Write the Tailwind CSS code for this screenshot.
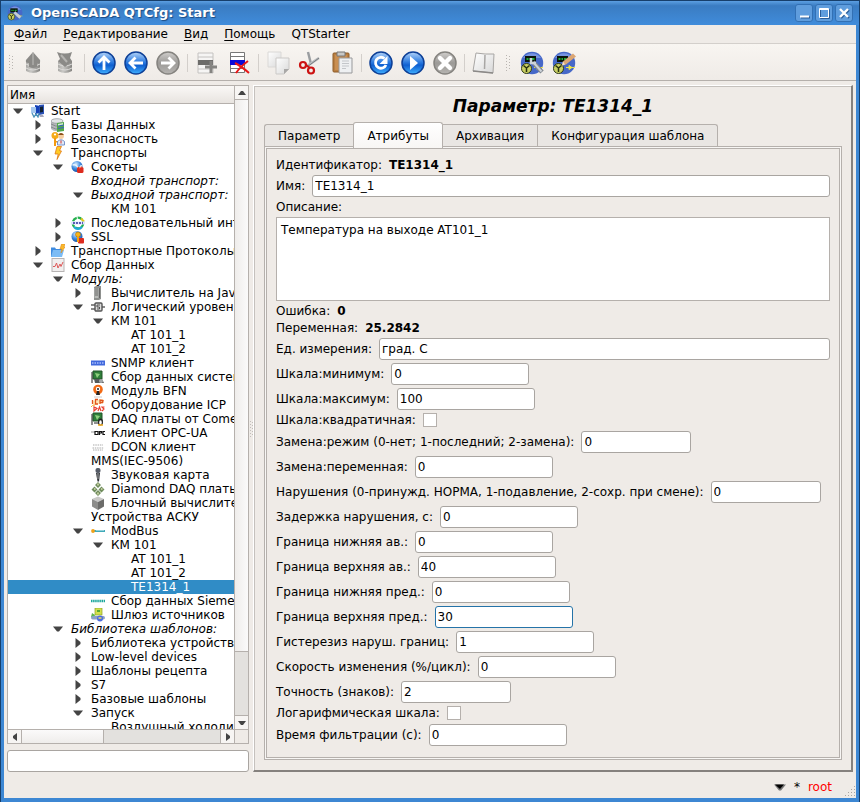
<!DOCTYPE html>
<html lang="ru">
<head>
<meta charset="utf-8">
<meta name="viewport" content="width=device-width, initial-scale=1">
<title>OpenSCADA QTCfg: Start</title>
<script src="https://cdn.jsdelivr.net/npm/@tailwindcss/browser@4"></script>
</head>
<body class="flex h-screen flex-col overflow-hidden border-x border-t border-[#173f6b] bg-[#3d87d3] font-['DejaVu_Sans',sans-serif] text-[12px] leading-[14px] text-black">

<svg class="absolute size-0" aria-hidden="true">
  <defs>
    <linearGradient id="gBlue" x1="0" y1="0" x2="0" y2="1"><stop offset="0" stop-color="#b4d4f8"/><stop offset=".45" stop-color="#2f7de0"/><stop offset=".6" stop-color="#0f5fd0"/><stop offset="1" stop-color="#3fb0ff"/></linearGradient>
    <linearGradient id="gGrey" x1="0" y1="0" x2="0" y2="1"><stop offset="0" stop-color="#d0cecc"/><stop offset=".5" stop-color="#9c9a97"/><stop offset="1" stop-color="#b6b4b1"/></linearGradient>
    <linearGradient id="gPage" x1="0" y1="0" x2="1" y2="1"><stop offset="0" stop-color="#fff"/><stop offset="1" stop-color="#d8d8d8"/></linearGradient>
    <linearGradient id="gCyl" x1="0" y1="0" x2="1" y2="0"><stop offset="0" stop-color="#a9a8a5"/><stop offset=".35" stop-color="#c9c8c5"/><stop offset="1" stop-color="#858481"/></linearGradient>
    <radialGradient id="gGlobe" cx=".4" cy=".3" r=".8"><stop offset="0" stop-color="#d6ecff"/><stop offset=".5" stop-color="#3f8be0"/><stop offset="1" stop-color="#0d3f92"/></radialGradient>
  </defs>
  <symbol id="down" viewBox="0 0 10 6"><path d="M0 0.5h10L6 5.5H4z" fill="#444"/></symbol>
  <symbol id="right" viewBox="0 0 6 10"><path d="M0.5 0L5.5 4v2L0.5 10z" fill="#444"/></symbol>
  <symbol id="scada" viewBox="0 0 24 24">
    <circle cx="12" cy="12" r="11.2" fill="#4668c8"/><path d="M3 7a11 11 0 0 1 18 0" fill="#7794e0"/>
    <rect x="5" y="5" width="11" height="6" fill="#0a140a"/><path d="M6.500 8h2M9.500 8h1.500M12 8h2.500" stroke="#1fae3a" stroke-width="2"/>
    <path d="M14 16.500h9M17 14.500v4l3-2z" stroke="#e8e24a" fill="#e8e24a"/>
    <circle cx="6.500" cy="17.500" r="5" fill="#c9cf62" stroke="#2f3a18"/><path d="M6.500 21v-4M6.500 17L3.500 14.500M6.500 17l3-2.500" stroke="#26300f" stroke-width="1.500"/>
  </symbol>
  <symbol id="t-start" viewBox="0 0 14 14"><path d="M4 1l5 1v7l-5 1z" fill="#1440b8"/><path d="M8 1l5-.5V10l-5 1z" fill="#2b52b8"/><path d="M9 3l3-.5V8l-3 .5z" fill="#123"/><path d="M0 3h5v6H0z" fill="#a6c8ee"/><path d="M1 9l2 4 2-3 2 3 1-4" fill="none" stroke="#4a90b8" stroke-width="1.300"/><path d="M8 11h4l1 2H9z" fill="#aab"/></symbol>
  <symbol id="t-db" viewBox="0 0 14 14"><path d="M0 3v8q3 3 9 2V4z" fill="#b5b8bb"/><ellipse cx="6" cy="3" rx="6" ry="2.300" fill="#e2e4e6" stroke="#8c9094" stroke-width=".7"/><path d="M0 6q5 3 9 2M0 9q5 3 9 2" fill="none" stroke="#84888c"/><path d="M6 5l7-1v9l-7 1z" fill="#51a84a"/><path d="M7 8l6-1M7 10.500l6-1" stroke="#3a62c4"/><path d="M7 6l5-1v1.500L7 7.500z" fill="#d5ecd1"/></symbol>
  <symbol id="t-key" viewBox="0 0 14 14"><circle cx="4" cy="3.500" r="3.500" fill="#f5ab18"/><circle cx="4" cy="2.500" r="1.100" fill="#fff"/><path d="M3 6h2v8H3zM5 9h2v1.500H5z" fill="#f29a10"/><circle cx="10" cy="4" r="3" fill="#f6cfa2"/><path d="M7 3q3-4 6 0z" fill="#8a4f18"/><path d="M6.500 13V9.500Q10 6 13.500 9.500V13z" fill="#dfe8f8" stroke="#5b7ec0" stroke-width=".8"/><path d="M10 8.500v3" stroke="#d0322a"/></symbol>
  <symbol id="t-bolt" viewBox="0 0 14 14"><path d="M6 .5L10.500.5 8.500 4.500 10.500 5 6 13.500 7.200 8 4 8z" fill="#ffcb24" stroke="#e07818" stroke-width=".8"/></symbol>
  <symbol id="t-sock" viewBox="0 0 14 14"><circle cx="6" cy="6.500" r="5.500" fill="url(#gGlobe)"/><path d="M1.500 5q4-1 5 2t4-2" fill="none" stroke="#e8f4ff" stroke-width="1.400"/><rect x="6" y="7" width="6.500" height="6" rx="1.500" fill="#dd2b1e"/><path d="M8 8l3-1.500" stroke="#ff9d80"/></symbol>
  <symbol id="t-ser" viewBox="0 0 14 14"><circle cx="7" cy="7" r="5.300" fill="none" stroke="#25b04e" stroke-width="2.200" stroke-dasharray="5 1"/><path d="M3 11a5.300 5.300 0 0 0 8 0" fill="none" stroke="#1fa8d8" stroke-width="2.200"/><path d="M10 2.500l3 3" stroke="#e4c81d" stroke-width="2"/><rect x="0" y="5.500" width="14" height="3" rx="1" fill="#dfe3ff"/><path d="M2 7h10" stroke="#30309c" stroke-width="1.500" stroke-dasharray="2 1"/></symbol>
  <symbol id="t-ssl" viewBox="0 0 14 14"><circle cx="6" cy="6.500" r="5.500" fill="url(#gGlobe)"/><rect x="7" y="8" width="6" height="5.500" rx="1" fill="#dd2b1e"/><circle cx="7" cy="4.500" r="2.500" fill="#f6b51d" stroke="#a86808" stroke-width=".6"/><path d="M6 6h2v6H6z" fill="#f0a212"/></symbol>
  <symbol id="t-fold" viewBox="0 0 14 14"><path d="M0 3.500h4l1 1.500h6v8H0z" fill="#3f8ce0"/><path d="M2 6h11l-2 7H0z" fill="#7cbcf5"/><path d="M10.500 0L14 0l-1 3 1 0-4 6 .8-4H9z" fill="#fbb92a" stroke="#dd8210" stroke-width=".5"/></symbol>
  <symbol id="t-daq" viewBox="0 0 14 14"><rect x="1" y=".5" width="12" height="13" fill="#f1efef" stroke="#b7b4b4"/><path d="M2 8.500h2L5.500 5 7 10l2-4 1 2.500L12 4" fill="none" stroke="#dd5a5a"/></symbol>
  <symbol id="t-calc" viewBox="0 0 14 14"><path d="M3 1l2-1h5v13l-2 1H3z" fill="#8e908e"/><path d="M3.500 2h4v10h-4z" fill="#b9bbb8"/><path d="M4 3h3M4 5h3M4 7h3M4 9h3" stroke="#555" stroke-width=".8"/><path d="M8.500 2v10" stroke="#666"/></symbol>
  <symbol id="t-logic" viewBox="0 0 14 14"><path d="M0 5h4M0 9h4M10 7h4" stroke="#666" stroke-width="1.400"/><rect x="4" y="3" width="7" height="8" rx="1" fill="#ddd" stroke="#555" stroke-width="1.400"/><path d="M9 5H6v2h2.500v2H6" fill="none" stroke="#444" stroke-width=".9"/></symbol>
  <symbol id="t-snmp" viewBox="0 0 14 14"><path d="M0 4.500h14v5H0z" fill="#4169dc"/><path d="M1 7h12" stroke="#8fa8f4" stroke-width="2" stroke-dasharray="1.500 1"/></symbol>
  <symbol id="t-sys" viewBox="0 0 14 14"><path d="M2 1h9v8H2z" fill="#2f7f3a" stroke="#235428"/><path d="M4 3l5 1-3 4z" fill="#8fd07e"/><path d="M1 2v11" stroke="#222"/><path d="M3 9h8l2 4H4z" fill="#555a5c"/><circle cx="10" cy="11" r="2" fill="#a6a9ab"/></symbol>
  <symbol id="t-bfn" viewBox="0 0 14 14"><circle cx="7" cy="5.500" r="4.800" fill="#f26a14"/><circle cx="7" cy="5" r="2.200" fill="#fff"/><path d="M5 11l1-4h2l1 4z" fill="#222"/><path d="M3 13h8" stroke="#ccc"/><circle cx="7" cy="5" r="1" fill="#222"/></symbol>
  <symbol id="t-icp" viewBox="0 0 14 14"><path d="M1 3l11-2 1 4-11 2z" fill="#fde7b6"/><path d="M1.500 2v4M7 1.500H4.500V6H7M9 6V2l3 .5-.5 2H9" fill="none" stroke="#e2541c" stroke-width="1.300"/><path d="M3 13V9l3 1.500zM7 13l1.500-4L10 13M13.500 9H11l2 2-2 2" fill="none" stroke="#ea4030" stroke-width="1.200"/><path d="M0 9q1-2 4-2" stroke="#f8b030" fill="none"/></symbol>
  <symbol id="t-com" viewBox="0 0 14 14"><path d="M2 1h9v8H2z" fill="#2f7f3a" stroke="#235428"/><path d="M4 3l5 1-3 4z" fill="#8fd07e"/><path d="M1 2v11M3 11h5" stroke="#222"/><ellipse cx="9.500" cy="10" rx="2.500" ry="3.500" fill="#222"/><ellipse cx="9.500" cy="10.500" rx="1.300" ry="2.300" fill="#fff"/><path d="M7 13h5" stroke="#f2ac1c" stroke-width="1.500"/></symbol>
  <symbol id="t-opc" viewBox="0 0 14 14"><path d="M0 6h4" stroke="#999"/><path d="M4 5.500h3v3H4zM8.500 9V5.500h2v1.500H9M14 5.500h-2v3h2" fill="none" stroke="#111" stroke-width="1.200"/></symbol>
  <symbol id="t-dcon" viewBox="0 0 14 14"><path d="M2 5h10M1.500 8h11M2 10h10" stroke="#aaa" stroke-width="1.200" stroke-dasharray="1.500 .8"/></symbol>
  <symbol id="t-mic" viewBox="0 0 14 14"><rect x="4.500" y="0" width="5" height="5" rx="2" fill="#555b66"/><path d="M5 5h4l-1 8.500H6.500z" fill="#2f3238"/><path d="M7 5v6" stroke="#aaa"/></symbol>
  <symbol id="t-dia" viewBox="0 0 14 14"><path d="M7 0l3 3-3 3-3-3zM3.500 4.500l3 3-3 3-3-3zM10.500 4.500l3 3-3 3-3-3zM7 8l3 3-3 3-3-3z" fill="#6f8c5c"/><path d="M7 1.500v2M3 7h1.500M10 7h1.500M7 10.500v2" stroke="#d8dcae" stroke-width="1.500"/></symbol>
  <symbol id="t-cube" viewBox="0 0 14 14"><path d="M7 0.500l6 2.500-6 3-6-3z" fill="#c9c9c7"/><path d="M1 3l6 3v8l-6-3.500z" fill="#8d8d8b"/><path d="M13 3L7 6v8l6-3.500z" fill="#6c6c6a"/></symbol>
  <symbol id="t-mod" viewBox="0 0 14 14"><path d="M3 7h11" stroke="#3fa9b8" stroke-width="2"/><path d="M5 6.500h8" stroke="#b7e3e8" stroke-width=".7"/><circle cx="2" cy="7" r="1.900" fill="#f0a21a"/></symbol>
  <symbol id="t-sie" viewBox="0 0 14 14"><path d="M0 7h14" stroke="#1ca79c" stroke-width="2.600" stroke-dasharray="1.500 .6"/></symbol>
  <symbol id="t-gate" viewBox="0 0 14 14"><rect x="4" y="0" width="7" height="7" fill="#d2e04c" stroke="#8da023" stroke-width=".7"/><path d="M6 2h3v2H6z" fill="#56a832"/><path d="M1 5l3 2-1 3-3-1z" fill="#5cb64c"/><rect x="0" y="8" width="14" height="3.500" rx="1.700" fill="#8aa0c8"/><circle cx="9" cy="10.500" r="3" fill="#4e6ce0"/><path d="M7.500 10h3" stroke="#e9e25a" stroke-width="1.500"/></symbol>
</svg>

<header class="flex h-6 shrink-0 items-center bg-linear-to-b from-[#5c9fe2] via-[#3a7cc2] via-20% to-[#408cdb] pr-1.5 pl-1.5">
  <svg class="size-4" viewBox="0 0 24 24"><use href="#scada"/><path d="M11 11l9 8" stroke="#c4ccd4" stroke-width="4"/></svg>
  <h1 class="ml-2 flex-1 text-[13px] font-bold text-white [text-shadow:1px_1px_1px_#1c4a80]">OpenSCADA QTCfg: Start</h1>
  <div class="flex gap-0.5">
    <button aria-label="Свернуть" class="size-[18px] rounded-[3px] border border-[#3270b4] bg-[#5f9ddd]"><svg viewBox="0 0 16 16" class="size-4"><path d="M5 12.500h9" stroke="#2a5d98" stroke-width="2"/><path d="M4 11.500h9" stroke="#fff" stroke-width="2"/></svg></button>
    <button aria-label="Развернуть" class="size-[18px] rounded-[3px] border border-[#3270b4] bg-[#5f9ddd]"><svg viewBox="0 0 16 16" class="size-4"><path d="M4.500 4.500h9v9h-9z" fill="none" stroke="#2a5d98"/><path d="M3.500 3.500h9v9h-9zM3 4.500h9" fill="none" stroke="#fff"/></svg></button>
    <button aria-label="Закрыть" class="size-[18px] rounded-[3px] border border-[#3270b4] bg-[#5f9ddd]"><svg viewBox="0 0 16 16" class="size-4"><path d="M5 5l8 8M13 5l-8 8" stroke="#2a5d98" stroke-width="2.200"/><path d="M4 4l8 8M12 4l-8 8" stroke="#fff" stroke-width="2.400"/></svg></button>
  </div>
</header>

<div class="mx-[3px] mb-1 flex min-h-0 flex-1 flex-col bg-[#efebe7]">
  <nav class="flex h-[19px] shrink-0 items-center gap-4 border-b border-[#d3cfcb] pl-2.5 [&_u]:underline-offset-2">
    <a href="#"><u>Ф</u>айл</a>
    <a href="#"><u>Р</u>едактирование</a>
    <a href="#"><u>В</u>ид</a>
    <a href="#"><u>П</u>омощь</a>
    <a href="#">QTStarter</a>
  </nav>

  <div role="toolbar" class="flex h-[37px] shrink-0 items-center border-b border-[#b5b0ac] bg-linear-to-b from-[#f8f5f1] to-[#efebe7] pt-0.5 pl-1">
    <svg class="mr-[3px] h-4 w-1.5" viewBox="0 0 6 16"><path d="M1.500 0v16M4.500 1v15" stroke="#b9b5b1" stroke-dasharray="1 2"/></svg>
    <button aria-label="Загрузить" class="flex w-8 justify-center"><svg class="size-6" viewBox="0 0 24 24"><path d="M5 10v10q7 4 14 0V10z" fill="url(#gCyl)"/><path d="M5 13q7 4 14 0M5 17q7 4 14 0" fill="none" stroke="#dddcda"/><path d="M12 1l7 8q1 3-3 3v4q-4 2-8 0v-4q-4 0-3-3z" fill="#8b8a87"/><path d="M12 2v12" stroke="#a5a4a1" stroke-width="2"/></svg></button>
    <button aria-label="Сохранить" class="flex w-8 justify-center"><svg class="size-6" viewBox="0 0 24 24"><path d="M5 10v10q7 4 14 0V10z" fill="url(#gCyl)"/><path d="M5 13q7 4 14 0M5 17q7 4 14 0" fill="none" stroke="#dddcda"/><path d="M4 1q8 3 15 0l-2 6 2 3-7 6-7-6 2-2z" fill="#8b8a87"/><path d="M8 4l6 7" stroke="#b5b4b1" stroke-width="2"/></svg></button>
    <span class="flex w-[7px] justify-center"><i class="h-[18px] w-px bg-[#d3cfcb]"></i></span>
    <button aria-label="Вверх" class="flex w-8 justify-center"><svg class="size-6" viewBox="0 0 24 24"><circle cx="12" cy="12" r="11" fill="url(#gBlue)" stroke="#0d3f96" stroke-width="1.500"/><path d="M12 19V6M6.500 11.500L12 6l5.500 5.500" fill="none" stroke="#fff" stroke-width="2.800"/></svg></button>
    <button aria-label="Назад" class="flex w-8 justify-center"><svg class="size-6" viewBox="0 0 24 24"><circle cx="12" cy="12" r="11" fill="url(#gBlue)" stroke="#0d3f96" stroke-width="1.500"/><path d="M19 12H6M11.500 6.500L6 12l5.500 5.500" fill="none" stroke="#fff" stroke-width="2.800"/></svg></button>
    <button aria-label="Вперёд" class="flex w-8 justify-center"><svg class="size-6" viewBox="0 0 24 24"><circle cx="12" cy="12" r="11" fill="url(#gGrey)" stroke="#85837f" stroke-width="1.500"/><path d="M5 12h13M12.500 6.500L18 12l-5.500 5.500" fill="none" stroke="#fff" stroke-width="2.800"/></svg></button>
    <span class="flex w-[7px] justify-center"><i class="h-[18px] w-px bg-[#d3cfcb]"></i></span>
    <button aria-label="Добавить" class="flex w-8 justify-center"><svg class="size-6" viewBox="0 0 24 24"><path d="M3 2h15v20H3z" fill="#f6f5f4" stroke="#c4c2c0"/><path d="M3 6h15M3 18h15" stroke="#c4c2c0"/><path d="M3 9h15v5H3z" fill="#6d6c6a"/><path d="M16 10v12M10 16h12" stroke="#858481" stroke-width="3"/></svg></button>
    <button aria-label="Удалить" class="flex w-8 justify-center"><svg class="size-6" viewBox="0 0 24 24"><path d="M3.500 1.500h14v20h-14z" fill="#fff" stroke="#777"/><path d="M3 5.500h15M3 17.500h15" stroke="#777"/><path d="M3 9h15v5H3z" fill="#0a0ad8"/><path d="M8 12q6 3 14 10M21 10Q13 16 9 22" fill="none" stroke="#e81818" stroke-width="2"/></svg></button>
    <span class="flex w-[7px] justify-center"><i class="h-[18px] w-px bg-[#d3cfcb]"></i></span>
    <button aria-label="Копировать" class="flex w-8 justify-center"><svg class="size-6" viewBox="0 0 24 24"><path d="M2 1h13v11l-4 4H2z" fill="url(#gPage)" stroke="#dad8d6"/><path d="M15 12h-4v4z" fill="#999"/><path d="M10 7h13v11l-5 5h-8z" fill="url(#gPage)" stroke="#cbc9c7"/><path d="M23 18h-5v5z" fill="#a9a8a7"/></svg></button>
    <button aria-label="Вырезать" class="flex w-8 justify-center"><svg class="size-6" viewBox="0 0 24 24"><path d="M10 1l3 12" stroke="#9a9da0" stroke-width="2.400"/><path d="M21 7L9 15" stroke="#b9bcbf" stroke-width="2.600"/><path d="M21 7L9 16" stroke="#66696c" stroke-width=".8"/><circle cx="5" cy="14" r="3" fill="none" stroke="#cc1212" stroke-width="2.200"/><circle cx="13" cy="19.500" r="3" fill="none" stroke="#cc1212" stroke-width="2.200"/><path d="M8 14l4 3" stroke="#cc1212" stroke-width="2"/></svg></button>
    <button aria-label="Вставить" class="flex w-8 justify-center"><svg class="size-6" viewBox="0 0 24 24"><rect x="3" y="2" width="16" height="19" rx="1" fill="#b97f42" stroke="#8d5c28"/><path d="M5 4h12v15H5z" fill="#c98f52"/><path d="M7 1h8v4H7z" fill="#c9c9c7" stroke="#777"/><path d="M9 7h13v15H9z" fill="#eef0f2" stroke="#98999b"/><path d="M12 10h7M12 12.500h7M12 15h7M12 17.500h4" stroke="#c3c6ca"/></svg></button>
    <span class="flex w-[7px] justify-center"><i class="h-[18px] w-px bg-[#d3cfcb]"></i></span>
    <button aria-label="Обновить" class="flex w-8 justify-center"><svg class="size-6" viewBox="0 0 24 24"><circle cx="12" cy="12" r="11" fill="url(#gBlue)" stroke="#0d3f96" stroke-width="1.500"/><path d="M15.500 7.500a5.500 5.500 0 1 0 1.500 6.500" fill="none" stroke="#fff" stroke-width="2.800"/><path d="M18.500 5v8h-8z" fill="#fff"/></svg></button>
    <button aria-label="Запустить" class="flex w-8 justify-center"><svg class="size-6" viewBox="0 0 24 24"><circle cx="12" cy="12" r="11" fill="url(#gBlue)" stroke="#0d3f96" stroke-width="1.500"/><path d="M9 5l8 7-8 7z" fill="#fff"/></svg></button>
    <button aria-label="Остановить" class="flex w-8 justify-center"><svg class="size-6" viewBox="0 0 24 24"><circle cx="12" cy="12" r="11" fill="url(#gGrey)" stroke="#85837f" stroke-width="1.500"/><path d="M7 7l10 10M17 7L7 17" stroke="#fff" stroke-width="4.400" stroke-linecap="round"/></svg></button>
    <span class="flex w-[7px] justify-center"><i class="h-[18px] w-px bg-[#d3cfcb]"></i></span>
    <button aria-label="Руководство" class="flex w-8 justify-center"><svg class="size-6" viewBox="0 0 24 24"><path d="M4 2l9 1 9 0-1 19-9-1-11-1z" fill="url(#gPage)" stroke="#a8a6a4"/><path d="M13 4l-.5 14" stroke="#a8a6a4" stroke-width="1.500"/><path d="M1 20l20 2" stroke="#8b8987" stroke-width="1.500"/></svg></button>
    <svg class="mx-[5px] h-4 w-1.5" viewBox="0 0 6 16"><path d="M1.500 0v16M4.500 1v15" stroke="#b9b5b1" stroke-dasharray="1 2"/></svg>
    <button aria-label="Конфигуратор" class="flex w-8 justify-center"><svg class="size-6" viewBox="0 0 24 24"><use href="#scada"/><path d="M13 11l9 10" stroke="#80878e" stroke-width="4.500"/><path d="M11 7v5h5" fill="none" stroke="#ced4da" stroke-width="2.500"/><path d="M13.500 11.500l8 9" stroke="#ced4da" stroke-width="2"/></svg></button>
    <button aria-label="Визуализация" class="flex w-8 justify-center"><svg class="size-6" viewBox="0 0 24 24"><use href="#scada"/><path d="M10 14.500l1-4 10-8 3 3-10 8z" fill="#dba673"/><path d="M10 14.500l1-4 2 3z" fill="#f5e2c8"/></svg></button>
  </div>

  <div class="flex min-h-0 flex-1 pt-1">
    <aside class="ml-[3px] flex w-[242px] shrink-0 flex-col">
      <div class="flex min-h-0 flex-1 flex-col border border-[#b5b0ac]">
        <div class="flex min-h-0 flex-1">
          <div class="flex min-w-0 flex-1 flex-col overflow-hidden bg-white">
            <div class="h-[18px] shrink-0 border-b border-[#b5b0ac] bg-linear-to-b from-[#faf8f6] to-[#e8e4e0] pl-0.5 leading-[18px]">Имя</div>
            <ul role="tree" class="min-h-0 flex-1 overflow-hidden whitespace-nowrap *:flex *:h-3.5 *:items-center">
              <li><button aria-label="Свернуть" class="mr-[3px] flex w-5 shrink-0 justify-center"><svg class="h-1.5 w-2.5"><use href="#down"/></svg></button><svg class="mr-1.5 size-3.5 shrink-0"><use href="#t-start"/></svg>Start</li>
              <li class="pl-5"><button aria-label="Раскрыть" class="mr-[3px] flex w-5 shrink-0 justify-center"><svg class="h-2.5 w-1.5"><use href="#right"/></svg></button><svg class="mr-1.5 size-3.5 shrink-0"><use href="#t-db"/></svg>Базы Данных</li>
              <li class="pl-5"><button aria-label="Раскрыть" class="mr-[3px] flex w-5 shrink-0 justify-center"><svg class="h-2.5 w-1.5"><use href="#right"/></svg></button><svg class="mr-1.5 size-3.5 shrink-0"><use href="#t-key"/></svg>Безопасность</li>
              <li class="pl-5"><button aria-label="Свернуть" class="mr-[3px] flex w-5 shrink-0 justify-center"><svg class="h-1.5 w-2.5"><use href="#down"/></svg></button><svg class="mr-1.5 size-3.5 shrink-0"><use href="#t-bolt"/></svg>Транспорты</li>
              <li class="pl-10"><button aria-label="Свернуть" class="mr-[3px] flex w-5 shrink-0 justify-center"><svg class="h-1.5 w-2.5"><use href="#down"/></svg></button><svg class="mr-1.5 size-3.5 shrink-0"><use href="#t-sock"/></svg>Сокеты</li>
              <li class="pl-[83px] italic">Входной транспорт:</li>
              <li class="pl-15 italic"><button aria-label="Свернуть" class="mr-[3px] flex w-5 shrink-0 justify-center"><svg class="h-1.5 w-2.5"><use href="#down"/></svg></button>Выходной транспорт:</li>
              <li class="pl-[103px]">КМ 101</li>
              <li class="pl-10"><button aria-label="Раскрыть" class="mr-[3px] flex w-5 shrink-0 justify-center"><svg class="h-2.5 w-1.5"><use href="#right"/></svg></button><svg class="mr-1.5 size-3.5 shrink-0"><use href="#t-ser"/></svg>Последовательный интерфейс</li>
              <li class="pl-10"><button aria-label="Раскрыть" class="mr-[3px] flex w-5 shrink-0 justify-center"><svg class="h-2.5 w-1.5"><use href="#right"/></svg></button><svg class="mr-1.5 size-3.5 shrink-0"><use href="#t-ssl"/></svg>SSL</li>
              <li class="pl-5"><button aria-label="Раскрыть" class="mr-[3px] flex w-5 shrink-0 justify-center"><svg class="h-2.5 w-1.5"><use href="#right"/></svg></button><svg class="mr-1.5 size-3.5 shrink-0"><use href="#t-fold"/></svg>Транспортные Протоколы</li>
              <li class="pl-5"><button aria-label="Свернуть" class="mr-[3px] flex w-5 shrink-0 justify-center"><svg class="h-1.5 w-2.5"><use href="#down"/></svg></button><svg class="mr-1.5 size-3.5 shrink-0"><use href="#t-daq"/></svg>Сбор Данных</li>
              <li class="pl-10 italic"><button aria-label="Свернуть" class="mr-[3px] flex w-5 shrink-0 justify-center"><svg class="h-1.5 w-2.5"><use href="#down"/></svg></button>Модуль:</li>
              <li class="pl-15"><button aria-label="Раскрыть" class="mr-[3px] flex w-5 shrink-0 justify-center"><svg class="h-2.5 w-1.5"><use href="#right"/></svg></button><svg class="mr-1.5 size-3.5 shrink-0"><use href="#t-calc"/></svg>Вычислитель на JavaLike</li>
              <li class="pl-15"><button aria-label="Свернуть" class="mr-[3px] flex w-5 shrink-0 justify-center"><svg class="h-1.5 w-2.5"><use href="#down"/></svg></button><svg class="mr-1.5 size-3.5 shrink-0"><use href="#t-logic"/></svg>Логический уровень</li>
              <li class="pl-20"><button aria-label="Свернуть" class="mr-[3px] flex w-5 shrink-0 justify-center"><svg class="h-1.5 w-2.5"><use href="#down"/></svg></button>КМ 101</li>
              <li class="pl-[123px]">AT 101_1</li>
              <li class="pl-[123px]">AT 101_2</li>
              <li class="pl-[83px]"><svg class="mr-1.5 size-3.5 shrink-0"><use href="#t-snmp"/></svg>SNMP клиент</li>
              <li class="pl-[83px]"><svg class="mr-1.5 size-3.5 shrink-0"><use href="#t-sys"/></svg>Сбор данных системы</li>
              <li class="pl-[83px]"><svg class="mr-1.5 size-3.5 shrink-0"><use href="#t-bfn"/></svg>Модуль BFN</li>
              <li class="pl-[83px]"><svg class="mr-1.5 size-3.5 shrink-0"><use href="#t-icp"/></svg>Оборудование ICP</li>
              <li class="pl-[83px]"><svg class="mr-1.5 size-3.5 shrink-0"><use href="#t-com"/></svg>DAQ платы от Comedi</li>
              <li class="pl-[83px]"><svg class="mr-1.5 size-3.5 shrink-0"><use href="#t-opc"/></svg>Клиент OPC-UA</li>
              <li class="pl-[83px]"><svg class="mr-1.5 size-3.5 shrink-0"><use href="#t-dcon"/></svg>DCON клиент</li>
              <li class="pl-[83px]">MMS(IEC-9506)</li>
              <li class="pl-[83px]"><svg class="mr-1.5 size-3.5 shrink-0"><use href="#t-mic"/></svg>Звуковая карта</li>
              <li class="pl-[83px]"><svg class="mr-1.5 size-3.5 shrink-0"><use href="#t-dia"/></svg>Diamond DAQ платы</li>
              <li class="pl-[83px]"><svg class="mr-1.5 size-3.5 shrink-0"><use href="#t-cube"/></svg>Блочный вычислитель</li>
              <li class="pl-[83px]">Устройства АСКУ</li>
              <li class="pl-15"><button aria-label="Свернуть" class="mr-[3px] flex w-5 shrink-0 justify-center"><svg class="h-1.5 w-2.5"><use href="#down"/></svg></button><svg class="mr-1.5 size-3.5 shrink-0"><use href="#t-mod"/></svg>ModBus</li>
              <li class="pl-20"><button aria-label="Свернуть" class="mr-[3px] flex w-5 shrink-0 justify-center"><svg class="h-1.5 w-2.5"><use href="#down"/></svg></button>КМ 101</li>
              <li class="pl-[123px]">AT 101_1</li>
              <li class="pl-[123px]">AT 101_2</li>
              <li class="bg-[#308cc6] pl-[123px] text-white" aria-selected="true">TE1314_1</li>
              <li class="pl-[83px]"><svg class="mr-1.5 size-3.5 shrink-0"><use href="#t-sie"/></svg>Сбор данных Siemens</li>
              <li class="pl-[83px]"><svg class="mr-1.5 size-3.5 shrink-0"><use href="#t-gate"/></svg>Шлюз источников</li>
              <li class="pl-10 italic"><button aria-label="Свернуть" class="mr-[3px] flex w-5 shrink-0 justify-center"><svg class="h-1.5 w-2.5"><use href="#down"/></svg></button>Библиотека шаблонов:</li>
              <li class="pl-15"><button aria-label="Раскрыть" class="mr-[3px] flex w-5 shrink-0 justify-center"><svg class="h-2.5 w-1.5"><use href="#right"/></svg></button>Библиотека устройств</li>
              <li class="pl-15"><button aria-label="Раскрыть" class="mr-[3px] flex w-5 shrink-0 justify-center"><svg class="h-2.5 w-1.5"><use href="#right"/></svg></button>Low-level devices</li>
              <li class="pl-15"><button aria-label="Раскрыть" class="mr-[3px] flex w-5 shrink-0 justify-center"><svg class="h-2.5 w-1.5"><use href="#right"/></svg></button>Шаблоны рецепта</li>
              <li class="pl-15"><button aria-label="Раскрыть" class="mr-[3px] flex w-5 shrink-0 justify-center"><svg class="h-2.5 w-1.5"><use href="#right"/></svg></button>S7</li>
              <li class="pl-15"><button aria-label="Раскрыть" class="mr-[3px] flex w-5 shrink-0 justify-center"><svg class="h-2.5 w-1.5"><use href="#right"/></svg></button>Базовые шаблоны</li>
              <li class="pl-15"><button aria-label="Свернуть" class="mr-[3px] flex w-5 shrink-0 justify-center"><svg class="h-1.5 w-2.5"><use href="#down"/></svg></button>Запуск</li>
              <li class="pl-[103px]">Воздушный холодильник</li>
            </ul>
          </div>
          <div class="flex w-3.5 flex-col border-l border-[#b5b0ac] bg-[#e3e1de]">
            <button aria-label="Прокрутить вверх" class="flex h-3.5 items-center justify-center border-b border-[#b5b0ac] bg-[#f7f5f3]"><svg class="h-1 w-2" viewBox="0 0 8 4"><path d="M0 4h8L5 0H3z" fill="#444"/></svg></button>
            <div class="flex-[88] border-b border-[#b5b0ac] bg-linear-to-r from-[#efedeb] to-[#fbfafa]"></div>
            <div class="flex-[10]"></div>
            <button aria-label="Прокрутить вниз" class="flex h-3.5 items-center justify-center border-t border-[#b5b0ac] bg-[#f7f5f3]"><svg class="h-1 w-2" viewBox="0 0 8 4"><path d="M0 0h8L5 4H3z" fill="#444"/></svg></button>
          </div>
        </div>
        <div class="flex h-3.5 border-t border-[#b5b0ac] bg-[#e3e1de]">
          <button aria-label="Прокрутить влево" class="flex w-3.5 items-center justify-center border-r border-[#b5b0ac] bg-[#f7f5f3]"><svg class="h-2 w-1" viewBox="0 0 4 8"><path d="M4 0v8L0 5V3z" fill="#444"/></svg></button>
          <div class="flex-[41] border-r border-[#b5b0ac] bg-linear-to-b from-[#fbfafa] to-[#efedeb]"></div>
          <div class="flex-[59]"></div>
          <button aria-label="Прокрутить вправо" class="flex w-3.5 items-center justify-center border-l border-[#b5b0ac] bg-[#f7f5f3]"><svg class="h-2 w-1" viewBox="0 0 4 8"><path d="M0 0v8l4-3V3z" fill="#444"/></svg></button>
          <div class="w-3.5 border-l border-[#b5b0ac] bg-[#efebe7]"></div>
        </div>
      </div>
      <input type="text" aria-label="Поиск" class="mt-1.5 h-[22px] w-full shrink-0 rounded-[3px] border border-[#a9a5a1] bg-white px-[3px]">
    </aside>

    <div class="flex w-1 shrink-0 items-center justify-center"><svg class="h-4 w-1" viewBox="0 0 4 16"><path d="M1.500 0v16M3.500 1v15" stroke="#c2beba" stroke-dasharray="1 2"/></svg></div>

    <main class="mr-[3px] flex min-w-0 flex-1 flex-col border-t border-r-2 border-b-2 border-l border-t-white border-r-[#85817e] border-b-[#85817e] border-l-white">
      <div class="flex min-h-0 flex-1 flex-col border-t border-l border-[#c5c1bd] px-[9px] pt-[9px] pb-2.5">
        <h2 class="mb-1.5 text-center text-[17px] leading-5 font-bold italic">Параметр: TE1314_1</h2>
        <div role="tablist" class="flex h-6 shrink-0 items-end">
          <button role="tab" class="h-[22px] rounded-tl-[3px] border-t border-l border-[#b5b0ac] bg-[#e9e6e3] px-[13px]">Параметр</button>
          <button role="tab" aria-selected="true" class="relative -mb-0.5 h-[26px] rounded-t-[3px] border border-b-0 border-[#b5b0ac] bg-linear-to-b from-white to-[#f8f6f4] px-[13px]">Атрибуты</button>
          <button role="tab" class="h-[22px] border-t border-[#b5b0ac] bg-[#e9e6e3] px-[13px]">Архивация</button>
          <button role="tab" class="h-[22px] rounded-tr-[3px] border-x border-t border-[#b5b0ac] bg-[#e9e6e3] px-[13px]">Конфигурация шаблона</button>
        </div>
        <div class="flex min-h-0 flex-1 flex-col border border-[#b5b0ac] bg-[#f8f6f4] p-px">
          <form class="flex min-h-0 flex-1 flex-col gap-[3px] border border-[#b5b0ac] bg-[#efebe7] px-[9px] pt-[9px] whitespace-nowrap">
            <div class="flex gap-[7px]"><span>Идентификатор:</span><b>TE1314_1</b></div>
            <div class="flex items-center gap-[7px]"><label for="f1">Имя:</label><input id="f1" value="TE1314_1" class="h-[22px] min-w-0 flex-1 rounded-[3px] border border-[#a9a5a1] bg-white px-0.5"></div>
            <label for="f2">Описание:</label>
            <textarea id="f2" class="h-[84px] shrink-0 resize-none border border-[#b5b0ac] bg-white px-1 py-[5px]">Температура на выходе AT101_1</textarea>
            <div class="flex gap-[7px]"><span>Ошибка:</span><b>0</b></div>
            <div class="flex gap-[7px]"><span>Переменная:</span><b>25.2842</b></div>
            <div class="flex items-center gap-[7px]"><label for="f3">Ед. измерения:</label><input id="f3" value="град. С" class="h-[22px] min-w-0 flex-1 rounded-[3px] border border-[#a9a5a1] bg-white px-0.5"></div>
            <div class="flex items-center gap-[7px]"><label for="f4">Шкала:минимум:</label><input id="f4" value="0" class="h-[22px] w-[138px] rounded-[3px] border border-[#a9a5a1] bg-white px-0.5"></div>
            <div class="flex items-center gap-[7px]"><label for="f5">Шкала:максимум:</label><input id="f5" value="100" class="h-[22px] w-[138px] rounded-[3px] border border-[#a9a5a1] bg-white px-0.5"></div>
            <div class="flex items-center gap-[7px]"><label for="f6">Шкала:квадратичная:</label><input id="f6" type="checkbox" class="size-3.5 appearance-none border border-[#b5b0ac] bg-white"></div>
            <div class="mt-px flex items-center gap-[7px]"><label for="f7">Замена:режим (0-нет; 1-последний; 2-замена):</label><input id="f7" value="0" class="h-[22px] w-[110px] rounded-[3px] border border-[#a9a5a1] bg-white px-0.5"></div>
            <div class="flex items-center gap-[7px]"><label for="f8">Замена:переменная:</label><input id="f8" value="0" class="h-[22px] w-[138px] rounded-[3px] border border-[#a9a5a1] bg-white px-0.5"></div>
            <div class="flex items-center gap-[7px]"><label for="f9">Нарушения (0-принужд. НОРМА, 1-подавление, 2-сохр. при смене):</label><input id="f9" value="0" class="h-[22px] w-[110px] rounded-[3px] border border-[#a9a5a1] bg-white px-0.5"></div>
            <div class="flex items-center gap-[7px]"><label for="f10">Задержка нарушения, с:</label><input id="f10" value="0" class="h-[22px] w-[138px] rounded-[3px] border border-[#a9a5a1] bg-white px-0.5"></div>
            <div class="flex items-center gap-[7px]"><label for="f11">Граница нижняя ав.:</label><input id="f11" value="0" class="h-[22px] w-[138px] rounded-[3px] border border-[#a9a5a1] bg-white px-0.5"></div>
            <div class="flex items-center gap-[7px]"><label for="f12">Граница верхняя ав.:</label><input id="f12" value="40" class="h-[22px] w-[138px] rounded-[3px] border border-[#a9a5a1] bg-white px-0.5"></div>
            <div class="flex items-center gap-[7px]"><label for="f13">Граница нижняя пред.:</label><input id="f13" value="0" class="h-[22px] w-[138px] rounded-[3px] border border-[#a9a5a1] bg-white px-0.5"></div>
            <div class="flex items-center gap-[7px]"><label for="f14">Граница верхняя пред.:</label><input id="f14" value="30" class="h-[22px] w-[138px] rounded-[3px] border border-[#2573a8] bg-white px-0.5"></div>
            <div class="flex items-center gap-[7px]"><label for="f15">Гистерезиз наруш. границ:</label><input id="f15" value="1" class="h-[22px] w-[138px] rounded-[3px] border border-[#a9a5a1] bg-white px-0.5"></div>
            <div class="flex items-center gap-[7px]"><label for="f16">Скорость изменения (%/цикл):</label><input id="f16" value="0" class="h-[22px] w-[138px] rounded-[3px] border border-[#a9a5a1] bg-white px-0.5"></div>
            <div class="flex items-center gap-[7px]"><label for="f17">Точность (знаков):</label><input id="f17" value="2" class="h-[22px] w-[110px] rounded-[3px] border border-[#a9a5a1] bg-white px-0.5"></div>
            <div class="flex items-center gap-[7px]"><label for="f18">Логарифмическая шкала:</label><input id="f18" type="checkbox" class="size-3.5 appearance-none border border-[#b5b0ac] bg-white"></div>
            <div class="mt-px flex items-center gap-[7px]"><label for="f19">Время фильтрации (с):</label><input id="f19" value="0" class="h-[22px] w-[138px] rounded-[3px] border border-[#a9a5a1] bg-white px-0.5"></div>
          </form>
        </div>
      </div>
    </main>
  </div>

  <footer class="flex h-[26px] shrink-0 items-center justify-end gap-2 pt-1">
    <svg class="h-[7px] w-3" viewBox="0 0 12 7"><path d="M0 .5h12L7 6.500H5z" fill="#777"/><path d="M1 .5h9L6 5z" fill="#000"/></svg>
    <span>*</span>
    <button class="text-[#f00]">root</button>
    <svg class="ml-0.5 size-3.5 self-end" viewBox="0 0 14 14"><path d="M12.500 2v12M9.500 5v9M6.500 8v6M3.500 11v3" stroke="#aaa6a2" stroke-dasharray="1 2"/></svg>
  </footer>
</div>
</body>
</html>
